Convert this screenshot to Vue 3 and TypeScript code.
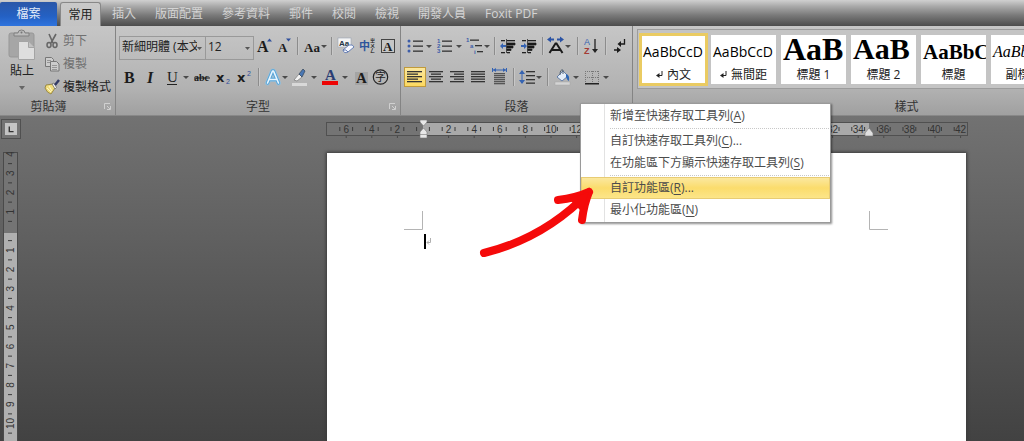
<script setup lang="ts">
import { ref } from 'vue'

interface Tool {
  label: string
  w: number
  art?: string
  sep?: boolean
  on?: boolean
}

const drop = (x: number, y = 9): string =>
  `<path d="M${x} ${y}h6l-3 3z" fill="#4a4a4a"/>`
const sep = (w: number): Tool => ({ label: '', w, sep: true })
const lines = (rows: number[][], color = '#333'): string =>
  rows.map(([x, y, w]) => `<rect x="${x}" y="${y}" width="${w}" height="1.3" fill="${color}"/>`).join('')
const glyph = (x: number, y: number, size: number, text: string, extra = ''): string =>
  `<text x="${x}" y="${y}" font-size="${size}" font-family="Liberation Serif, serif" font-weight="bold" fill="#1c1c1c" ${extra}>${text}</text>`
const sans = 'font-family="Liberation Sans, Noto Sans CJK TC, sans-serif"'

const fontTop: Tool[] = [
  { label: '放大字型', w: 20, art: glyph(3, 16, 16, 'A') + '<path d="M13 5.5l2.5-3 2.500 3z" fill="#2f4f9c"/>' },
  { label: '縮小字型', w: 21, art: glyph(4, 16, 13, 'A') + '<path d="M12 2.500h5l-2.500 3z" fill="#2f4f9c"/>' },
  sep(6),
  { label: '變更大小寫', w: 28, art: glyph(3, 16, 13, 'Aa') + drop(20) },
  sep(6),
  { label: '清除格式設定', w: 23, art: '<rect x="3" y="2" width="13" height="9" fill="#f4f4f4" stroke="#9aa4b4" stroke-width=".6"/><text x="4" y="9.500" font-size="8" font-weight="bold" ' + sans + ' fill="#234">Aa</text><path d="M8 14l6-5q4-1 5 2l-6 5q-4 2-5-2z" fill="#f6f8ff" stroke="#5a75ae" stroke-width=".9"/><path d="M8 14q3-1 5 2" fill="none" stroke="#5a75ae"/>' },
  { label: '注音標示', w: 20, art: '<text x="1" y="14" font-size="11" font-weight="bold" ' + sans + ' fill="#2d559c">中</text><g font-size="5" font-weight="bold" ' + sans + ' fill="#222"><text x="12" y="6">ㄓ</text><text x="12" y="11">ㄨ</text><text x="12" y="16">ㄥ</text></g>' },
  { label: '字元框線', w: 20, art: '<rect x="3.500" y="3.500" width="13" height="13" fill="#c6c6c6" stroke="#444"/>' + glyph(5, 15, 13, 'A') },
]
const fontBottom: Tool[] = [
  { label: '粗體', w: 22, art: glyph(5, 16, 16, 'B') },
  { label: '斜體', w: 20, art: glyph(6, 16, 16, 'I', 'font-style="italic"') },
  { label: '底線', w: 30, art: '<text x="6" y="15" font-size="15" font-family="Liberation Serif, serif" fill="#1c1c1c">U</text><rect x="6" y="17" width="10" height="1" fill="#222"/>' + drop(22) },
  { label: '刪除線', w: 22, art: glyph(3, 14, 10, 'abc') + '<rect x="3" y="10.500" width="16" height="1" fill="#1c1c1c"/>' },
  { label: '下標', w: 22, art: '<text x="3" y="15" font-size="13" font-weight="bold" font-family="DejaVu Sans, sans-serif" fill="#1c1c1c">x</text><text x="13" y="17" font-size="7" ' + sans + ' fill="#2f4f9c">2</text>' },
  { label: '上標', w: 21, art: '<text x="2" y="15" font-size="13" font-weight="bold" font-family="DejaVu Sans, sans-serif" fill="#1c1c1c">x</text><text x="12" y="9" font-size="7" ' + sans + ' fill="#2f4f9c">2</text>' },
  sep(5),
  { label: '文字效果', w: 28, art: '<g fill="none" stroke-linecap="round" stroke-linejoin="round"><path d="M6.500 16L11.500 4h1l5 12M9 12.500h6.500" stroke="#8cc4ea" stroke-width="5" opacity=".6"/><path d="M6.500 16L11.500 4h1l5 12M9 12.500h6.500" stroke="#56a4d8" stroke-width="3.400"/><path d="M6.500 16L11.500 4h1l5 12M9 12.500h6.500" stroke="#e8f6ff" stroke-width="1.600"/></g>' + drop(21) },
  { label: '文字醒目提示色彩', w: 30, art: '<path d="M5 13l5-6 3 3-5 4z" fill="#f2f2f2" stroke="#777" stroke-width=".7"/><path d="M10 7l4-5 2 2-3 6z" fill="#4a77b4" stroke="#345" stroke-width=".7"/><rect x="3" y="16" width="15" height="3" fill="#d9d9d9"/>' + drop(22) },
  { label: '字型色彩', w: 31, art: '<text x="6" y="13" font-size="15" font-weight="bold" font-family="Liberation Serif, serif" fill="#2a3d73">A</text><rect x="3" y="14" width="16" height="4" fill="#ed0505"/>' + drop(23) },
  { label: '字元網底', w: 20, art: '<rect x="5" y="5" width="13" height="13" fill="#a4a4a4"/>' + glyph(6, 16, 15, 'A') },
  { label: '圍繞字元', w: 21, art: '<circle cx="10.500" cy="10" r="7.200" fill="none" stroke="#222" stroke-width="1.200"/><text x="5" y="14" font-size="11" ' + sans + ' fill="#222">字</text>' },
]

const dots = (x: number): string => [5, 10, 15].map(y => `<circle cx="${x}" cy="${y}" r="1.500" fill="#3d5da8"/>`).join('')
const indent = (d: string): string =>
  lines([[3, 4, 4], [3, 16, 4], [9, 4, 8], [9, 16, 3]], '#222') +
  '<path d="M9 7h8v2H9zM9 10h6v2H9zM9 13h4v1.500H9zM8.500 3v14" fill="#1a1a1a" stroke="#1a1a1a" stroke-width=".7"/>' +
  `<path d="${d}" fill="#3563b2"/>`

const paraTop: Tool[] = [
  { label: '項目符號', w: 30, art: dots(5) + lines([[9, 4.5, 10], [9, 9.5, 10], [9, 14.5, 10]]) + drop(22) },
  { label: '編號', w: 30, art: '<g font-size="6" font-weight="bold" ' + sans + ' fill="#3d5da8"><text x="3" y="7">1</text><text x="3" y="12">2</text><text x="3" y="17">3</text></g>' + lines([[8, 4.5, 10], [8, 9.5, 10], [8, 14.5, 10]]) + drop(22) },
  { label: '多層次清單', w: 28, art: '<g font-size="6" font-weight="bold" ' + sans + ' fill="#3d5da8"><text x="2" y="6">1</text><text x="6" y="12">a</text><text x="10" y="18">i</text></g>' + lines([[6, 3.5, 9], [11, 9, 7], [13, 15, 6]]) + drop(20) },
  sep(6),
  { label: '減少縮排', w: 21, art: indent('M2 10l3-3v2h3v2H5v2z') },
  { label: '增加縮排', w: 21, art: indent('M8 10L5 7v2H2v2h3v2z') },
  sep(5),
  { label: '亞洲方式配置', w: 30, art: '<path d="M4.500 17L10.500 7.500h1l6 9.500M7 14h8" fill="none" stroke="#1a1a1a" stroke-width="2"/><path d="M2 3.500l4-3v2h3v2H6v2zM19 3.500l-4-3v2h-3v2h3v2z" fill="#2b53a4"/>' + drop(20) },
  sep(5),
  { label: '排序', w: 23, art: '<text x="4" y="9" font-size="9" ' + sans + ' fill="#3563b2">A</text><text x="4" y="18" font-size="9" font-weight="bold" ' + sans + ' fill="#a33a34">Z</text><path d="M15 3v12" stroke="#222" stroke-width="1.300"/><path d="M12 13h6l-3 4z" fill="#222"/>' },
  sep(6),
  { label: '顯示編輯標記', w: 20, art: '<path d="M5 14h5M15.500 3v5H11" fill="none" stroke="#1a1a1a" stroke-width="1.300"/><path d="M12 5v6L8.500 8zM8 11v6l4-3z" fill="#1a1a1a"/>' },
]
const paraBottom: Tool[] = [
  { label: '靠左對齊', w: 22, on: true, art: lines([[3, 4, 15], [3, 6.5, 11], [3, 9, 15], [3, 11.5, 11], [3, 14, 15]]) },
  { label: '置中', w: 21, art: lines([[3, 4, 14], [5, 6.5, 10], [3, 9, 14], [5, 11.5, 10], [3, 14, 14]]) },
  { label: '靠右對齊', w: 21, art: lines([[3, 4, 14], [7, 6.5, 10], [3, 9, 14], [7, 11.5, 10], [3, 14, 14]]) },
  { label: '左右對齊', w: 21, art: lines([[3, 4, 14], [3, 6.5, 14], [3, 9, 14], [3, 11.5, 14], [3, 14, 14]]) },
  { label: '分散對齊', w: 22, art: lines([[5, 6, 11], [5, 8, 11], [5, 10, 11], [5, 12, 11], [5, 14, 11], [5, 16, 11]], '#555') + '<path d="M3.500 1v4M17.500 1v4M4 3h13" stroke="#3563b2"/><path d="M4 3l3-2v4zM17 3l-3-2v4z" fill="#3563b2"/>' },
  sep(5),
  { label: '行距', w: 29, art: '<path d="M6 4v12" stroke="#3563b2"/><path d="M3 7l3-4 3 4zM3 13l3 4 3-4z" fill="#3563b2"/>' + lines([[10, 4, 9], [10, 8, 9], [10, 12, 9], [10, 15.5, 9]]) + drop(20) },
  sep(6),
  { label: '網底', w: 30, art: '<path d="M6 10l6-6 5 5-6 5z" fill="#e4edf8" stroke="#4a6a9c" stroke-width=".8"/><path d="M9 8q0-6 3-5v4" fill="none" stroke="#456" stroke-width=".9"/><path d="M15 7q4 1 3 7-2-1-3-4z" fill="#2e66b4"/><rect x="4" y="15" width="15" height="3" fill="#d4d4d4" stroke="#a2a2a2" stroke-width=".4"/>' + drop(22) },
  { label: '框線', w: 30, art: '<path d="M4.500 4v12M11.500 4v12M17.500 4v12M4 4.500h14M4 10.500h14" stroke="#777" stroke-dasharray="1 1"/><rect x="4" y="16" width="14" height="1.500" fill="#222"/>' + drop(22) },
]

const tabs = ['插入', '版面配置', '參考資料', '郵件', '校閱', '檢視', '開發人員', 'Foxit PDF']

const styles = [
  { sample: 'AaBbCcD', name: '內文', mark: true, kind: 'body', on: true },
  { sample: 'AaBbCcD', name: '無間距', mark: true, kind: 'body', on: false },
  { sample: 'AaB', name: '標題 1', mark: false, kind: 'h1', on: false },
  { sample: 'AaB', name: '標題 2', mark: false, kind: 'h2', on: false },
  { sample: 'AaBbC', name: '標題', mark: false, kind: 'title', on: false },
  { sample: 'AaBbCc', name: '副標題', mark: false, kind: 'sub', on: false },
]

const menu = [
  [{ text: '新增至快速存取工具列', key: 'A', more: '' }],
  [
    { text: '自訂快速存取工具列', key: 'C', more: '...' },
    { text: '在功能區下方顯示快速存取工具列', key: 'S', more: '' },
  ],
  [
    { text: '自訂功能區', key: 'R', more: '...' },
    { text: '最小化功能區', key: 'N', more: '' },
  ],
]

const fontName = ref('body')
const fontSize = ref('12')

// Horizontal scale: one unit is 12.8px, zero sits 97px from the left edge.
const hx = (u: number): number => 97 + u * 12.8
const hNumbers = Array.from({ length: 25 }, (_, i) => i * 2 - 6).filter(n => n !== 0)
const hTicks = Array.from({ length: 49 }, (_, i) => i - 6.5)
// Vertical scale: one unit is 19.25px, zero sits 79px from the top edge.
const vy = (u: number): number => 79 + u * 19.25
const vNumbers = Array.from({ length: 15 }, (_, i) => i - 4).filter(n => n !== 0)
const vTicks = Array.from({ length: 44 }, (_, i) => i - 3.5)
</script>

<template>
  <div class="app">
    <nav class="tabs">
      <button class="tab file">檔案</button>
      <button class="tab home">常用</button>
      <div class="rest">
        <button v-for="t in tabs" :key="t" class="tab">{{ t }}</button>
      </div>
    </nav>

    <div class="ribbon">
      <section class="group clipboard">
        <div class="content">
          <button class="paste">
            <svg width="28" height="32" viewBox="0 0 28 32">
              <rect x="1" y="4" width="25" height="24" rx="2" fill="#a6a6a6" stroke="#979797" />
              <path d="M6 6V4h4q0-3 3.500-3T17 4h4v3H6z" fill="#bcbcbc" stroke="#808080" />
              <circle cx="13.500" cy="3.500" r="1" fill="#777" />
              <path d="M10.500 12.500h10l6 6v12h-16z" fill="#dedede" stroke="#a4a4a4" />
              <path d="M20.500 12.500v6h6" fill="#c2c2c2" stroke="#a4a4a4" />
            </svg>
            <span>貼上</span>
            <svg width="6" height="4" viewBox="0 0 6 4"><path d="M0 0h6L3 4z" fill="#666" /></svg>
          </button>
          <div class="side">
            <button class="row dim">
              <svg width="16" height="16" viewBox="0 0 16 16">
                <path d="M5 1l4 9M12 1L7 10" stroke="#666" stroke-width="1.600" />
                <ellipse cx="5" cy="12" rx="2" ry="2.400" fill="none" stroke="#666" stroke-width="1.500" />
                <ellipse cx="11" cy="12" rx="2" ry="2.400" fill="none" stroke="#666" stroke-width="1.500" />
              </svg>剪下</button>
            <button class="row dim">
              <svg width="16" height="16" viewBox="0 0 16 16">
                <path d="M1.500 1.500h6l2 2v7h-8z" fill="#ccc" stroke="#777" />
                <path d="M6.500 5.500h6l2.500 2.500v7H6.500z" fill="#ccc" stroke="#777" />
                <path d="M3 4.500h4M3 6.500h3M8 9.500h5M8 11.500h5M8 13.500h5" stroke="#888" stroke-width=".8" />
              </svg>複製</button>
            <button class="row">
              <svg width="16" height="16" viewBox="0 0 16 16">
                <path d="M2 6l7-1 2 4-4 6q-4-1-6-6z" fill="#f0dc7c" stroke="#8b7a34" stroke-width=".8" />
                <path d="M3 9l4 4M5 7l3 5" stroke="#fff8c8" />
                <path d="M8 5l3 5 1.500-1.500L10 4z" fill="#eee" stroke="#555" stroke-width=".6" />
                <path d="M11 6l4-5" stroke="#333b66" stroke-width="2.400" />
              </svg>複製格式</button>
          </div>
        </div>
        <footer>剪貼簿<svg class="launch" width="7" height="7" viewBox="0 0 7 7"><path d="M.5 6V.5H6M3 3l3 3M6.500 3v3.500H3" fill="none" stroke="#d0d0d0" /></svg></footer>
      </section>

      <section class="group font">
        <div class="content stack">
          <div class="tools">
            <label class="combo name-box"><select v-model="fontName" aria-label="字型"><option value="body">新細明體 (本文)</option></select><svg width="5" height="3" viewBox="0 0 5 3"><path d="M0 0h5L2.500 3z" fill="#555" /></svg></label>
            <label class="combo size-box"><select v-model="fontSize" aria-label="字型大小"><option value="12">12</option></select><svg width="5" height="3" viewBox="0 0 5 3"><path d="M0 0h5L2.500 3z" fill="#555" /></svg></label>
            <template v-for="(t, i) in fontTop" :key="i">
              <i v-if="t.sep" class="sep" :style="{ width: t.w + 'px' }"></i>
              <button v-else class="tool" :aria-label="t.label"><svg :width="t.w" height="20" v-html="t.art"></svg></button>
            </template>
          </div>
          <div class="tools">
            <template v-for="(t, i) in fontBottom" :key="i">
              <i v-if="t.sep" class="sep" :style="{ width: t.w + 'px' }"></i>
              <button v-else class="tool" :aria-label="t.label"><svg :width="t.w" height="20" v-html="t.art"></svg></button>
            </template>
          </div>
        </div>
        <footer>字型<svg class="launch" width="7" height="7" viewBox="0 0 7 7"><path d="M.5 6V.5H6M3 3l3 3M6.500 3v3.500H3" fill="none" stroke="#d0d0d0" /></svg></footer>
      </section>

      <section class="group para">
        <div class="content stack">
          <div v-for="(row, r) in [paraTop, paraBottom]" :key="r" class="tools">
            <template v-for="(t, i) in row" :key="i">
              <i v-if="t.sep" class="sep" :style="{ width: t.w + 'px' }"></i>
              <button v-else class="tool" :class="{ on: t.on }" :aria-label="t.label"><svg :width="t.w" height="20" v-html="t.art"></svg></button>
            </template>
          </div>
        </div>
        <footer>段落</footer>
      </section>

      <section class="group gallery">
        <div class="cards">
          <button v-for="(s, i) in styles" :key="i" class="card" :class="{ on: s.on }">
            <span class="sample" :class="s.kind">{{ s.sample }}</span>
            <span class="name">
              <svg v-if="s.mark" width="7" height="8" viewBox="0 0 7 8"><path d="M6 0v4.500H2" fill="none" stroke="#222" /><path d="M0 4.500L3.500 2v5z" fill="#222" /></svg>
              {{ s.name }}
            </span>
          </button>
        </div>
        <footer>樣式</footer>
      </section>
    </div>

    <main class="work">
      <div class="corner">
        <button class="stop" aria-label="定位點"><svg width="14" height="14" viewBox="0 0 14 14"><path d="M5 4v6h5" fill="none" stroke="#333" stroke-width="1.600" /></svg></button>
      </div>
      <div class="hruler">
        <svg width="642" height="20" viewBox="0 0 642 20">
          <rect x=".5" y="3.500" width="641" height="13" fill="#747474" stroke="#505050" />
          <rect x="97" y="4" width="446" height="12" fill="#a9a9a9" />
          <g class="digits">
            <text v-for="n in hNumbers" :key="n" :x="hx(n)" y="14" text-anchor="middle">{{ Math.abs(n) }}</text>
          </g>
          <path v-for="n in hTicks" :key="n" :d="`M${hx(n)} 8v4`" stroke="#3b3b3b" />
          <path v-for="n in hNumbers" :key="'t' + n" :d="`M${hx(n)} 17v2`" stroke="#484848" />
          <path d="M94 1h7v2l-3.500 4L94 3zM94 19v-6l3.500-4 3.500 4v6zM94 15.500h7" fill="#e8e8e8" stroke="#777" stroke-width=".6" />
          <path d="M539 17v-3l4-5 4 5v3z" fill="#e0e0e0" stroke="#777" stroke-width=".6" />
        </svg>
      </div>
      <div class="vruler">
        <svg width="16" height="900" viewBox="0 0 16 900">
          <rect x=".5" y=".5" width="14" height="899" fill="#747474" stroke="#4a4a4a" />
          <rect x="1" y="81" width="13" height="819" fill="#b0b0b0" />
          <g class="digits">
            <text v-for="n in vNumbers" :key="n" :transform="`translate(11 ${vy(n)}) rotate(-90)`" text-anchor="middle">{{ Math.abs(n) }}</text>
          </g>
          <path v-for="n in vTicks" :key="n" :d="`M5 ${vy(n)}h4`" stroke="#3b3b3b" />
        </svg>
      </div>
      <div class="desk">
        <article class="paper">
          <svg width="19" height="19" viewBox="0 0 19 19"><path d="M18.500 0v18.500H0" fill="none" stroke="#b4b4b4" /></svg>
          <div class="line"><i class="caret"></i><svg width="6" height="8" viewBox="0 0 6 8"><path d="M4.500 0v4.500H1M3 2.500l-2 2 2 2" fill="none" stroke="#b0b0b0" /></svg></div>
          <svg width="19" height="19" viewBox="0 0 19 19"><path d="M.5 0v18.500H19" fill="none" stroke="#b4b4b4" /></svg>
        </article>
      </div>
    </main>

    <div class="menu" role="menu">
      <div v-for="(g, gi) in menu" :key="gi" class="block">
        <button v-for="m in g" :key="m.key" class="item" :class="{ on: m.key === 'R' }" role="menuitem">{{ m.text }}(<u>{{ m.key }}</u>){{ m.more }}</button>
      </div>
    </div>

    <svg class="arrow" width="120" height="76" viewBox="0 0 120 76">
      <path d="M7 69Q68 54 112 8M81 16Q99 14 112 8Q107 20 105 36" fill="none" stroke="#f50a0a" stroke-width="8" stroke-linecap="round" stroke-linejoin="round" />
      <path d="M92 15L112 8L105 28z" fill="#f50a0a" />
    </svg>
  </div>
</template>

<style>
body {
  margin: 0;
}
</style>

<style scoped>
.app {
  position: relative;
  display: flex;
  flex-direction: column;
  height: 100vh;
  overflow: hidden;
  font: 12px/16px "Open Sans", "Noto Sans CJK TC", sans-serif;
  color: #222;
}
button {
  padding: 0;
  border: 0;
  background: none;
  font: inherit;
  color: inherit;
  white-space: nowrap;
}
svg {
  display: block;
  flex: none;
}
.tabs {
  display: flex;
  align-items: flex-end;
  height: 26px;
  flex: none;
  background: linear-gradient(#d0d0d0, #a8a8a8 25%, #787878 60%, #4c4c4c);
}
.tab {
  height: 24px;
  color: #d4d4d4;
}
.file {
  width: 57px;
  margin-right: 3px;
  border-radius: 2px 2px 0 0;
  background: linear-gradient(#2a57a8, #2461c4 60%, #2f74de);
  color: #e4ecf8;
}
.home {
  width: 41px;
  border: 1px solid #888;
  border-bottom: 0;
  border-radius: 3px 3px 0 0;
  background: linear-gradient(#c9c9c9, #c4c4c4);
  color: #222;
}
.rest {
  display: flex;
  gap: 19px;
  margin-left: 11px;
}
.ribbon {
  display: flex;
  height: 90px;
  flex: none;
  box-sizing: border-box;
  border-bottom: 1px solid #888;
  background: linear-gradient(#c6c6c6, #bcbcbc 35%, #b2b2b2 70%, #a0a0a0);
}
.group {
  display: flex;
  flex-direction: column;
  flex: none;
  box-sizing: border-box;
  border-right: 1px solid #848484;
}
.clipboard {
  width: 116px;
}
.font {
  width: 285px;
}
.para {
  width: 232px;
}
.gallery {
  flex: 1;
  min-width: 0;
  border: 0;
  overflow: hidden;
}
.content {
  display: flex;
  flex: 1;
}
footer {
  position: relative;
  height: 16px;
  flex: none;
  text-align: center;
  color: #333;
}
.clipboard footer {
  padding-right: 18px;
}
.gallery footer {
  padding-left: 156px;
}
.launch {
  position: absolute;
  right: 4px;
  top: 4px;
}
.paste {
  display: flex;
  flex-direction: column;
  align-items: center;
  align-self: flex-start;
  width: 44px;
  padding-top: 3px;
}
.paste span {
  margin: 2px 0 7px;
}
.side {
  display: flex;
  flex-direction: column;
  padding-top: 3px;
}
.row {
  display: flex;
  align-items: center;
  gap: 3px;
  height: 23px;
}
.dim {
  color: #707070;
}
.stack {
  flex-direction: column;
  gap: 7px;
  padding: 10px 0 0 3px;
}
.tools {
  display: flex;
  height: 24px;
}
.tool {
  height: 20px;
}
.tool.on {
  background: linear-gradient(#fbe8a0, #fcd85c);
  outline: 1px solid #c09a3c;
  outline-offset: -1px;
}
.sep {
  height: 18px;
  margin-top: 1px;
  background: linear-gradient(90deg, #8c8c8c 1px, #c8c8c8 1px, #c8c8c8 2px, transparent 2px) 2px 0 no-repeat;
}
.combo {
  display: flex;
  align-items: center;
  box-sizing: border-box;
  height: 24px;
  border: 1px solid #999;
  padding-right: 3px;
}
.name-box {
  width: 87px;
}
.size-box {
  width: 48px;
  border-left: 0;
}
select {
  flex: 1;
  min-width: 0;
  width: 0;
  height: 22px;
  padding: 0 0 2px 2px;
  border: 0;
  appearance: none;
  background: none;
  font: inherit;
  color: inherit;
  overflow: hidden;
  text-overflow: clip;
}
.cards {
  display: flex;
  gap: 5px;
  flex: none;
  box-sizing: border-box;
  height: 60px;
  margin: 3px 0 10px 4px;
  padding: 5px 0 5px 3px;
  border: 1px solid #9c9c9c;
  border-right: 0;
  background: #c4c4c4;
}
.card {
  display: flex;
  flex-direction: column;
  flex: none;
  width: 65px;
  height: 49px;
  overflow: hidden;
  background: #fff;
}
.card.on {
  outline: 3px solid #eacb62;
  outline-offset: -1px;
}
.sample {
  width: 65px;
  height: 32px;
  box-sizing: border-box;
  padding-left: 2px;
  overflow: hidden;
  text-align: left;
  line-height: 34px;
  color: #000;
}
.body {
  font-size: 14px;
}
.h1,
.h2,
.title {
  font-family: "Liberation Serif", serif;
  font-weight: bold;
}
.h1 {
  font-size: 32px;
  line-height: 28px;
}
.h2 {
  font-size: 30px;
  line-height: 28px;
}
.title {
  font-size: 21px;
}
.sub {
  font: italic 16px/34px "Liberation Serif", serif;
}
.name {
  display: flex;
  justify-content: center;
  align-items: center;
  gap: 4px;
}
.work {
  display: grid;
  grid-template-columns: 22px minmax(0, 1fr);
  grid-template-rows: 36px minmax(0, 1fr);
  flex: 1;
  min-height: 0;
  background: linear-gradient(#727272, #424242);
}
.corner {
  padding: 3px 0 0 1px;
}
.stop {
  padding: 3px;
  width: 20px;
  height: 20px;
  border: 1px solid #505050;
  background: #747474;
}
.stop svg {
  width: 12px;
  height: 12px;
  background: #c4c4c4;
}
.hruler {
  padding: 3px 0 0 304px;
}
.vruler {
  padding-left: 3px;
  overflow: hidden;
}
.desk {
  display: flex;
  padding: 1px 58px 0 305px;
}
.paper {
  display: flex;
  flex: 1;
  box-sizing: border-box;
  padding: 58px 78px 0 77px;
  background: #fff;
  box-shadow: 0 0 3px 1px #3a3a3a;
}
.line {
  display: flex;
  flex: 1;
  align-items: center;
  height: 15px;
  margin-top: 23px;
}
.caret {
  width: 2px;
  height: 15px;
  margin-left: 1px;
  background: #000;
}
.digits {
  font: 10px "Liberation Sans", sans-serif;
  fill: #333;
}
.menu {
  position: absolute;
  left: 580px;
  top: 103px;
  width: 251px;
  box-sizing: border-box;
  padding: 1px 0;
  border: 1px solid #9a9a9a;
  background: linear-gradient(90deg, #fff 23px, #e2e2e2 23px, #e2e2e2 24px, #fff 24px);
  box-shadow: 1px 1px 2px rgba(0, 0, 0, 0.45);
  color: #4c4c4c;
}
.block + .block {
  padding-top: 3px;
  background: repeating-linear-gradient(90deg, #c8c8c8 0, #c8c8c8 1px, transparent 1px, transparent 2px) 29px 1px / 100% 1px no-repeat;
}
.item {
  display: block;
  width: 100%;
  height: 22px;
  padding-left: 29px;
  text-align: left;
}
.item.on {
  background: linear-gradient(#fbe9a4, #fbdc6c 50%, #fce68c);
  outline: 1px solid #e8cc74;
  outline-offset: -1px;
}
.item u {
  text-underline-offset: 2px;
}
.arrow {
  position: absolute;
  left: 477px;
  top: 184px;
}
</style>
